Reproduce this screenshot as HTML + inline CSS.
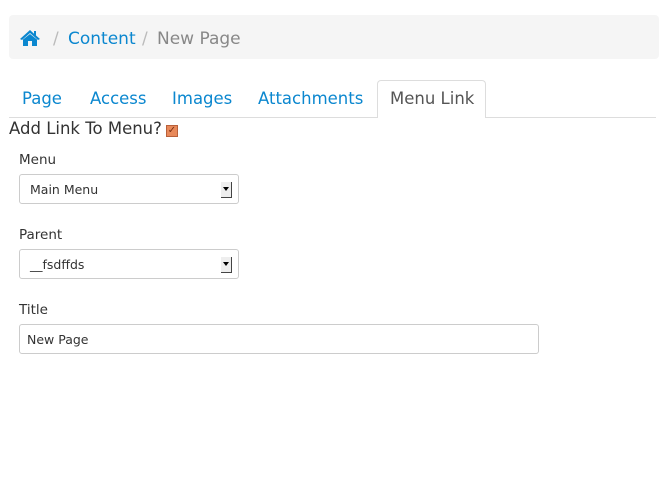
<!DOCTYPE html><html><head><style>
body{margin:0;width:659px;height:495px;background:#fff;font-family:"DejaVu Sans","Liberation Sans",sans-serif;color:#333;position:relative;overflow:hidden}
.a{position:absolute;white-space:nowrap}
.bc{left:9px;top:15px;width:650px;height:44px;background:#f5f5f5;border-radius:4px}
.blue{color:#0b87cf}
.t{font-size:16.5px;top:89px}
.sel{position:absolute;left:19px;border:1px solid #ccc;border-radius:3px;font-size:12.5px;line-height:29px;box-sizing:border-box;width:220px;height:30px}
.arr{position:absolute;right:6px;top:7px;width:10px;height:15px;border-right:1px solid #444;border-bottom:1px solid #444;background:#eee}
.arr:after{content:"";position:absolute;left:2px;top:5px;border:3px solid transparent;border-top:4px solid #000}
.lbl{font-size:13.5px;left:19px}
</style></head><body>
<div class="a bc"></div>
<svg class="a" style="left:19px;top:29px" width="22" height="18" viewBox="0 0 22 18"><path d="M11 1 L1 10 L3 11 L11 4 L19 11 L21 10 L17 6.5 V2 H15 V4.7 Z" fill="#0b87cf"/><path d="M4 10.5 L11 5 L18 10.5 V17 H13 V12 H9 V17 H4 Z" fill="#0b87cf"/></svg>
<div class="a" style="left:53px;top:29px;font-size:17px;color:#bbb">/</div>
<div class="a blue" style="left:68px;top:29px;font-size:17px">Content</div>
<div class="a" style="left:142px;top:29px;font-size:17px;color:#bbb">/</div>
<div class="a" style="left:157px;top:29px;font-size:17px;color:#888">New Page</div>
<div class="a" style="left:9px;top:117px;width:647px;height:1px;background:#ddd"></div>
<div class="a" style="left:377px;top:80px;width:109px;height:38px;border:1px solid #ddd;border-bottom:none;border-radius:4px 4px 0 0;background:#fff;box-sizing:border-box"></div>
<div class="a t blue" style="left:22px">Page</div>
<div class="a t blue" style="left:90px">Access</div>
<div class="a t blue" style="left:172px">Images</div>
<div class="a t blue" style="left:258px">Attachments</div>
<div class="a t" style="left:390px;color:#555">Menu Link</div>
<div class="a" style="left:9px;top:119px;font-size:16.5px">Add Link To Menu?</div>
<div class="a" style="left:166px;top:125px;width:12px;height:12px;background:#e8895a;border:1px solid #b9603a;box-sizing:border-box;color:#7a2e10;font-size:10px;line-height:10px;text-align:center">✓</div>
<div class="a lbl" style="top:152px">Menu</div>
<div class="sel" style="top:174px"><span style="margin-left:10px">Main Menu</span><div class="arr"></div></div>
<div class="a lbl" style="top:227px">Parent</div>
<div class="sel" style="top:249px"><span style="margin-left:10px">__fsdffds</span><div class="arr"></div></div>
<div class="a lbl" style="top:302px">Title</div>
<div class="sel" style="top:324px;width:520px"><span style="margin-left:7px">New Page</span></div>
</body></html>
